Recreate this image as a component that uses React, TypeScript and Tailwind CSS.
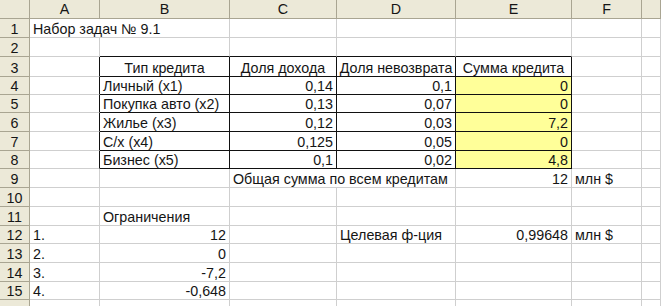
import React from 'react';

type Cell = { t?: string; a?: 'l' | 'r' | 'c'; span?: 2; y?: boolean };

const cols = ['A', 'B', 'C', 'D', 'E', 'F', ''];

// rows 1..16, columns A..G
const rows: Cell[][] = [
  [{ t: 'Набор задач № 9.1', span: 2 }, {}, {}, {}, {}, {}],
  [{}, {}, {}, {}, {}, {}, {}],
  [{}, { t: 'Тип кредита', a: 'c' }, { t: 'Доля дохода', a: 'c' }, { t: 'Доля невозврата', a: 'c' }, { t: 'Сумма кредита', a: 'c' }, {}, {}],
  [{}, { t: 'Личный (x1)' }, { t: '0,14', a: 'r' }, { t: '0,1', a: 'r' }, { t: '0', a: 'r', y: true }, {}, {}],
  [{}, { t: 'Покупка авто (x2)' }, { t: '0,13', a: 'r' }, { t: '0,07', a: 'r' }, { t: '0', a: 'r', y: true }, {}, {}],
  [{}, { t: 'Жилье (x3)' }, { t: '0,12', a: 'r' }, { t: '0,03', a: 'r' }, { t: '7,2', a: 'r', y: true }, {}, {}],
  [{}, { t: 'С/х (x4)' }, { t: '0,125', a: 'r' }, { t: '0,05', a: 'r' }, { t: '0', a: 'r', y: true }, {}, {}],
  [{}, { t: 'Бизнес (x5)' }, { t: '0,1', a: 'r' }, { t: '0,02', a: 'r' }, { t: '4,8', a: 'r', y: true }, {}, {}],
  [{}, {}, { t: 'Общая сумма по всем кредитам', span: 2 }, { t: '12', a: 'r' }, { t: 'млн $' }, {}],
  [{}, {}, {}, {}, {}, {}, {}],
  [{}, { t: 'Ограничения' }, {}, {}, {}, {}, {}],
  [{ t: '1.' }, { t: '12', a: 'r' }, {}, { t: 'Целевая ф-ция' }, { t: '0,99648', a: 'r' }, { t: 'млн $' }, {}],
  [{ t: '2.' }, { t: '0', a: 'r' }, {}, {}, {}, {}, {}],
  [{ t: '3.' }, { t: '-7,2', a: 'r' }, {}, {}, {}, {}, {}],
  [{ t: '4.' }, { t: '-0,648', a: 'r' }, {}, {}, {}, {}, {}],
  [{}, {}, {}, {}, {}, {}, {}],
];

const font = { fontFamily: '"Liberation Sans", Arial, sans-serif' };

function DataCell({ cell, r, c }: { cell: Cell; r: number; c: number }) {
  const last = c + (cell.span ?? 1) - 1;
  const inTable = r >= 3 && r <= 8;
  const rightBlack = inTable && last <= 4;
  const bottomBlack = (inTable && c >= 1 && c <= 4) || (r === 2 && c >= 1 && c <= 4);
  return (
    <div
      className={`flex items-end overflow-visible whitespace-nowrap border-r border-b px-[3px] text-[14.3px] leading-[16px] text-[#151515] ${
        cell.span === 2 ? 'col-span-2' : ''
      } ${rightBlack ? 'border-r-[#111]' : 'border-r-[#cfcfcf]'} ${bottomBlack ? 'border-b-[#111]' : 'border-b-[#cfcfcf]'} ${
        cell.y ? 'bg-[#ffff99]' : 'bg-white'
      } ${cell.a === 'r' ? 'justify-end' : cell.a === 'c' ? 'justify-center' : 'justify-start'}`}
    >
      {cell.t}
    </div>
  );
}

export default function App() {
  return (
    <div
      className="grid h-[306px] w-[661px] overflow-hidden bg-white grid-cols-[30px_70px_130px_107px_119px_116px_70px_19px] grid-rows-[19px_19px_19px_20px_18px_18px_19px_19px_18px_19px_19px_19px_18px_19px_19px_18px_19px]"
      style={font}
    >
      {/* column headers */}
      <div className="border-r border-b border-[#a9a592] bg-[#ece9d8]" />
      {cols.map((l, i) => (
        <div
          key={i}
          className="flex items-end justify-center border-r border-b border-[#a9a592] bg-[#ece9d8] text-[14.3px] leading-[17px] text-[#151515]"
        >
          {l}
        </div>
      ))}

      {rows.map((row, ri) => (
        <React.Fragment key={ri}>
          <div className="flex items-end justify-center border-r border-b border-[#a9a592] bg-[#ece9d8] text-[14.3px] leading-[16px] text-[#151515]">
            {ri < 15 ? ri + 1 : ''}
          </div>
          {(() => {
            let c = 0;
            return row.map((cell, ci) => {
              const el = <DataCell key={ci} cell={cell} r={ri + 1} c={c} />;
              c += cell.span ?? 1;
              return el;
            });
          })()}
        </React.Fragment>
      ))}
    </div>
  );
}
